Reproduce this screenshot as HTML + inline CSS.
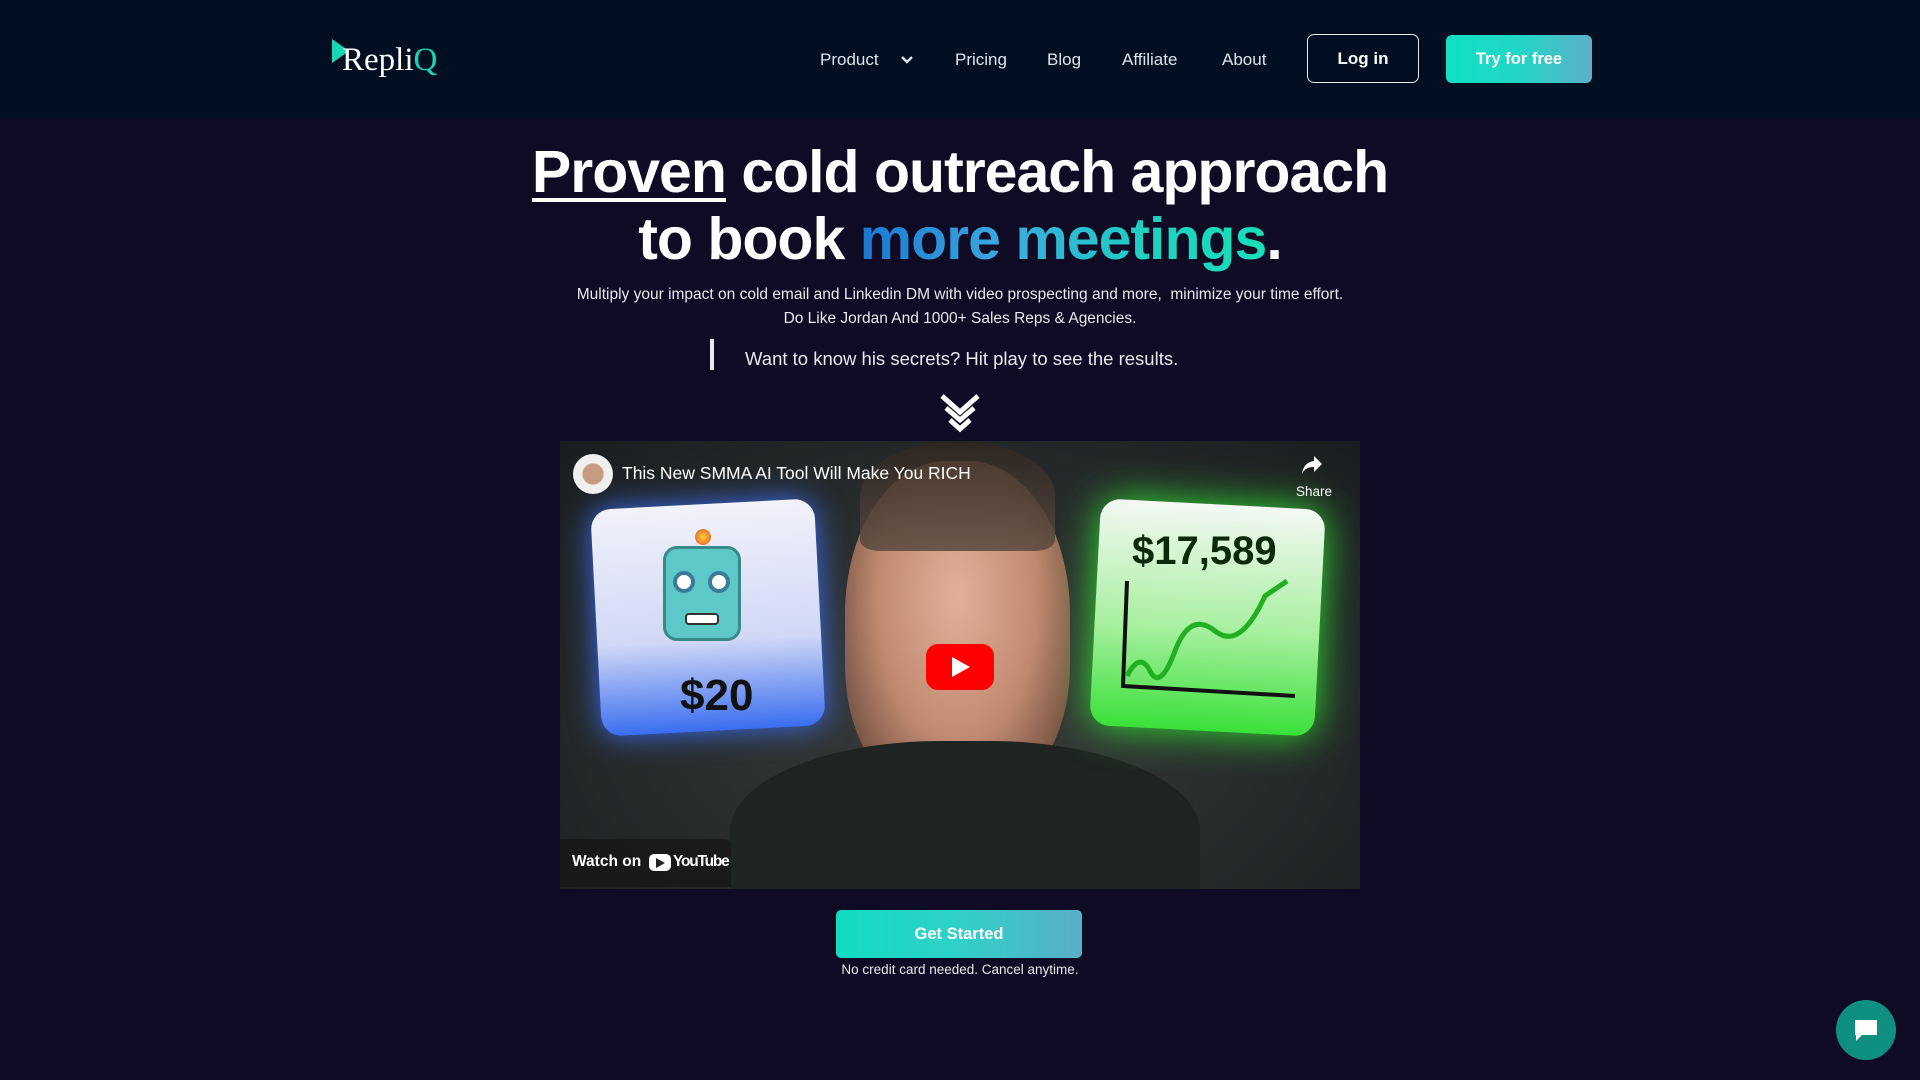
<!DOCTYPE html>
<html><head><meta charset="utf-8"><style>
*{margin:0;padding:0;box-sizing:border-box}
body{width:1920px;height:1080px;overflow:hidden;background:#0f0b24;font-family:"Liberation Sans",sans-serif;color:#fff;position:relative}
.nav{position:absolute;left:0;top:0;width:1920px;height:119px;background:#020e22}
.a{position:absolute}
.ni{position:absolute;top:50px;font-size:17px;color:#dfe3ea}
.btn1{position:absolute;left:1307px;top:34px;width:112px;height:49px;border:1.5px solid #e6e9ef;border-radius:7px;font-weight:bold;font-size:17px;text-align:center;line-height:48px}
.btn2{position:absolute;left:1446px;top:35px;width:146px;height:48px;border-radius:6px;background:linear-gradient(90deg,#10e0c4,#22d6c6 50%,#5cb0c8);font-weight:bold;font-size:16.5px;text-align:center;line-height:49px}
h1{position:absolute;left:0;top:139px;width:1920px;text-align:center;font-size:59px;line-height:67px;font-weight:bold;letter-spacing:-1px}
.grad{background:linear-gradient(90deg,#1a78d0,#3ca8e0 35%,#1fd0c0 70%,#16e0b8);-webkit-background-clip:text;background-clip:text;color:transparent}
.sub{position:absolute;left:0;top:283px;width:1920px;text-align:center;font-size:15.5px;line-height:24px;color:#e8e8ee}
.q{position:absolute;left:745px;top:348px;font-size:18.5px;color:#e8e8ee}
.vid{position:absolute;left:560px;top:441px;width:800px;height:448px;overflow:hidden;background:radial-gradient(ellipse at 50% 60%,#3a3d3c,#262a2b 60%,#1a1d1f)}
</style></head><body>
<div class="nav">
 <svg class="a" style="left:331px;top:38px" width="20" height="26" viewBox="0 0 20 26"><polygon points="1,1 18,13 1,25" fill="#19d6b4"/></svg>
 <div class="a" style="left:342px;top:42px;font-family:'Liberation Serif',serif;font-size:33px;color:#fff">Repli<span style="color:#19d6b4">Q</span></div>
 <div class="ni" style="left:820px">Product</div>
 <svg class="a" style="left:900px;top:55px" width="14" height="10" viewBox="0 0 14 10"><path d="M2 2 L7 7 L12 2" stroke="#dfe3ea" stroke-width="2.4" fill="none"/></svg>
 <div class="ni" style="left:955px">Pricing</div>
 <div class="ni" style="left:1047px">Blog</div>
 <div class="ni" style="left:1122px">Affiliate</div>
 <div class="ni" style="left:1222px">About</div>
 <div class="btn1">Log in</div>
 <div class="btn2">Try for free</div>
</div>
<h1><span style="text-decoration:underline;text-decoration-thickness:4px;text-underline-offset:6px">Proven</span> cold outreach approach<br>to book <span class="grad">more meetings</span>.</h1>
<div class="sub">Multiply your impact on cold email and Linkedin DM with video prospecting and more,&nbsp; minimize your time effort.<br>Do Like Jordan And 1000+ Sales Reps &amp; Agencies.</div>
<div class="a" style="left:710px;top:339px;width:4px;height:31px;background:#e8e8ee"></div>
<div class="q">Want to know his secrets? Hit play to see the results.</div>
<svg class="a" style="left:938px;top:392px" width="44" height="42" viewBox="0 0 44 42"><path d="M4 4 L22 20 L40 4 M8 16 L22 28 L36 16 M12 28 L22 37 L32 28" stroke="#fff" stroke-width="5" fill="none"/></svg>
<div class="vid">
 <div class="a" style="left:285px;top:20px;width:225px;height:340px;border-radius:45% 45% 40% 40%;background:radial-gradient(ellipse at 50% 40%,#e2b09a,#c08a70 50%,#7a5444 80%,#3a2e28 100%)"></div>
 <div class="a" style="left:300px;top:0px;width:195px;height:110px;border-radius:50% 50% 10% 10%;background:linear-gradient(#2e2620,#5a4a40);opacity:.85"></div>
 <div class="a" style="left:170px;top:300px;width:470px;height:200px;border-radius:45% 45% 0 0;background:#1e2421"></div>
 <div class="a" style="left:36px;top:63px;width:224px;height:227px;border-radius:20px;background:linear-gradient(#f2f2fa,#d0d8f6 60%,#3a6ef0);box-shadow:0 0 30px #3a6ef0;transform:rotate(-3deg)"></div>
 <div class="a" style="left:103px;top:105px;width:78px;height:95px;border-radius:14px;background:#5cc8c8;border:3px solid #3a8888"></div>
 <div class="a" style="left:113px;top:130px;width:22px;height:22px;border-radius:50%;border:4px solid #3a7a9a;background:#fff"></div>
 <div class="a" style="left:148px;top:130px;width:22px;height:22px;border-radius:50%;border:4px solid #3a7a9a;background:#fff"></div>
 <div class="a" style="left:125px;top:172px;width:34px;height:12px;border-radius:4px;background:#fff;border:2px solid #333"></div>
 <div class="a" style="left:135px;top:88px;width:16px;height:16px;border-radius:50%;background:radial-gradient(#ffd040,#e05020)"></div>
 <div class="a" style="left:120px;top:230px;font-size:44px;font-weight:bold;color:#111">$20</div>
 <div class="a" style="left:535px;top:63px;width:225px;height:227px;border-radius:20px;background:linear-gradient(#f4f8f4,#a8f0a0 55%,#3ae03a);box-shadow:0 0 40px #30e030;transform:rotate(3deg)"></div>
 <div class="a" style="left:572px;top:88px;font-size:40px;font-weight:bold;color:#0a2a0a">$17,589</div>
 <svg class="a" style="left:555px;top:135px" width="190" height="130" viewBox="0 0 190 130"><path d="M12 5 L8 110 L180 120" stroke="#111" stroke-width="4" fill="none"/><path d="M12 100 Q25 75 35 95 T60 75 T100 55 T150 20 L172 5" stroke="#22b022" stroke-width="5" fill="none"/></svg>
 <div class="a" style="left:366px;top:203px;width:68px;height:46px;border-radius:12px;background:#f00"></div>
 <svg class="a" style="left:390px;top:214px" width="22" height="24" viewBox="0 0 22 24"><polygon points="2,2 20,12 2,22" fill="#fff"/></svg>
 <div class="a" style="left:13px;top:13px;width:40px;height:40px;border-radius:50%;background:radial-gradient(#c89a80 35%,#f0f0f0 40%)"></div>
 <div class="a" style="left:62px;top:22px;font-size:17.5px;color:#fff">This New SMMA AI Tool Will Make You RICH</div>
 <svg class="a" style="left:740px;top:13px" width="24" height="22" viewBox="0 0 24 22"><path d="M14 2 L22 10 L14 18 V13 C8 13 4 15 2 20 C3 12 7 8 14 7 Z" fill="#fff"/></svg>
 <div class="a" style="left:736px;top:43px;font-size:13.5px;color:#fff">Share</div>
 <div class="a" style="left:0;top:398px;width:171px;height:48px;background:rgba(23,23,23,.85);border-radius:0 6px 0 0"></div>
 <div class="a" style="left:12px;top:412px;font-size:15.5px;color:#fff;font-weight:bold">Watch on</div>
 <div class="a" style="left:89px;top:413px;width:22px;height:17px;border-radius:5px;background:#fff"></div>
 <svg class="a" style="left:96px;top:417px" width="9" height="10" viewBox="0 0 9 10"><polygon points="0,0 9,5 0,10" fill="#222"/></svg>
 <div class="a" style="left:113px;top:412px;font-size:15.5px;color:#fff;font-weight:bold;letter-spacing:-1.2px">YouTube</div>
</div>
<div class="a" style="left:836px;top:910px;width:246px;height:48px;border-radius:5px;background:linear-gradient(90deg,#10dcc2,#30d0c8 50%,#5aaec8);text-align:center;line-height:48px;font-weight:bold;font-size:16.5px">Get Started</div>
<div class="a" style="left:0;top:962px;width:1920px;text-align:center;font-size:13.5px;color:#e8e8ee">No credit card needed. Cancel anytime.</div>
<div class="a" style="left:1836px;top:1000px;width:60px;height:60px;border-radius:50%;background:#0e8f80"></div>
<svg class="a" style="left:1852px;top:1016px" width="28" height="28" viewBox="0 0 28 28"><path d="M3 4 H25 V19 H10 L4 25 V19 H3 Z" fill="#fff"/></svg>
</body></html>
